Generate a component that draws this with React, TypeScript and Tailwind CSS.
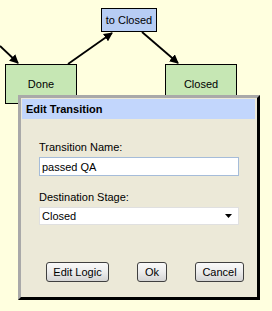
import React from "react";

const font = { fontFamily: '"Liberation Sans", Arial, sans-serif' };

function Node({ label, className }: { label: string; className: string }) {
  return (
    <div
      className={`absolute flex items-center justify-center border border-black text-[11px] text-black ${className}`}
    >
      {label}
    </div>
  );
}

function Button({ children, className = "" }: { children: React.ReactNode; className?: string }) {
  return (
    <button
      className={`h-[20px] rounded-[3px] border border-[#404040] bg-gradient-to-b from-[#fafafa] via-[#ececec] to-[#d4d4d4] text-[11px] leading-none text-black ${className}`}
    >
      {children}
    </button>
  );
}

export default function App() {
  return (
    <div className="relative h-[311px] w-[272px] overflow-hidden bg-[#ffffdf]" style={font}>
      {/* diagram edges */}
      <svg className="absolute left-0 top-0" width="272" height="311">
        <defs>
          <marker id="ah" markerWidth="9" markerHeight="9" refX="8" refY="4.5" orient="auto" markerUnits="userSpaceOnUse">
            <path d="M0,0 L9,4.5 L0,9 z" fill="#000" />
          </marker>
        </defs>
        <line x1="0" y1="46" x2="18" y2="63" stroke="#000" strokeWidth="1.8" markerEnd="url(#ah)" />
        <line x1="68" y1="64" x2="112" y2="33" stroke="#000" strokeWidth="1.8" markerEnd="url(#ah)" />
        <line x1="142" y1="32" x2="178" y2="63" stroke="#000" strokeWidth="1.8" markerEnd="url(#ah)" />
      </svg>

      <Node label="to Closed" className="left-[101px] top-[8px] h-[24px] w-[56px] bg-[#b7cdf4]" />
      <Node label="Done" className="left-[5px] top-[64px] h-[40px] w-[72px] bg-[#c6e7b4]" />
      <Node label="Closed" className="left-[165px] top-[64px] h-[40px] w-[72px] bg-[#c6e7b4]" />

      {/* dialog */}
      <div className="absolute left-[18px] top-[95px] flex h-[205px] w-[242px] flex-col border-[3px] border-b-black border-l-[#a9a9a9] border-r-black border-t-[#a9a9a9] bg-[#ece9d8] p-[1px] pr-[2px]">
        <div className="flex h-[20px] items-center bg-[#c2d6fc] px-[4px] text-[11px] font-bold text-black">
          Edit Transition
        </div>
        <div className="flex flex-col px-[17px] pt-[21px]">
          <div className="text-[11px] leading-[14px] text-black">Transition Name:</div>
          <input
            defaultValue="passed QA"
            className="mt-[3px] h-[19px] w-[200px] border border-[#a5bcd9] bg-white px-[2px] text-[11px] text-black outline-none"
            style={font}
          />
          <div className="mt-[14px] text-[11px] leading-[14px] text-black">Destination Stage:</div>
          <div className="mt-[3px] flex h-[18px] w-[200px] items-center justify-between border border-[#e0e0e0] bg-white pl-[2px] pr-[6px] text-[11px] text-black">
            <span>Closed</span>
            <svg width="7" height="4" viewBox="0 0 7 4">
              <path d="M0,0 L7,0 L3.5,4 z" fill="#000" />
            </svg>
          </div>
        </div>
        <div className="mt-[37px] flex items-center pl-[24px]">
          <Button className="w-[63px]">Edit Logic</Button>
          <Button className="ml-[28px] w-[30px]">Ok</Button>
          <Button className="ml-[28px] w-[49px]">Cancel</Button>
        </div>
      </div>
    </div>
  );
}
